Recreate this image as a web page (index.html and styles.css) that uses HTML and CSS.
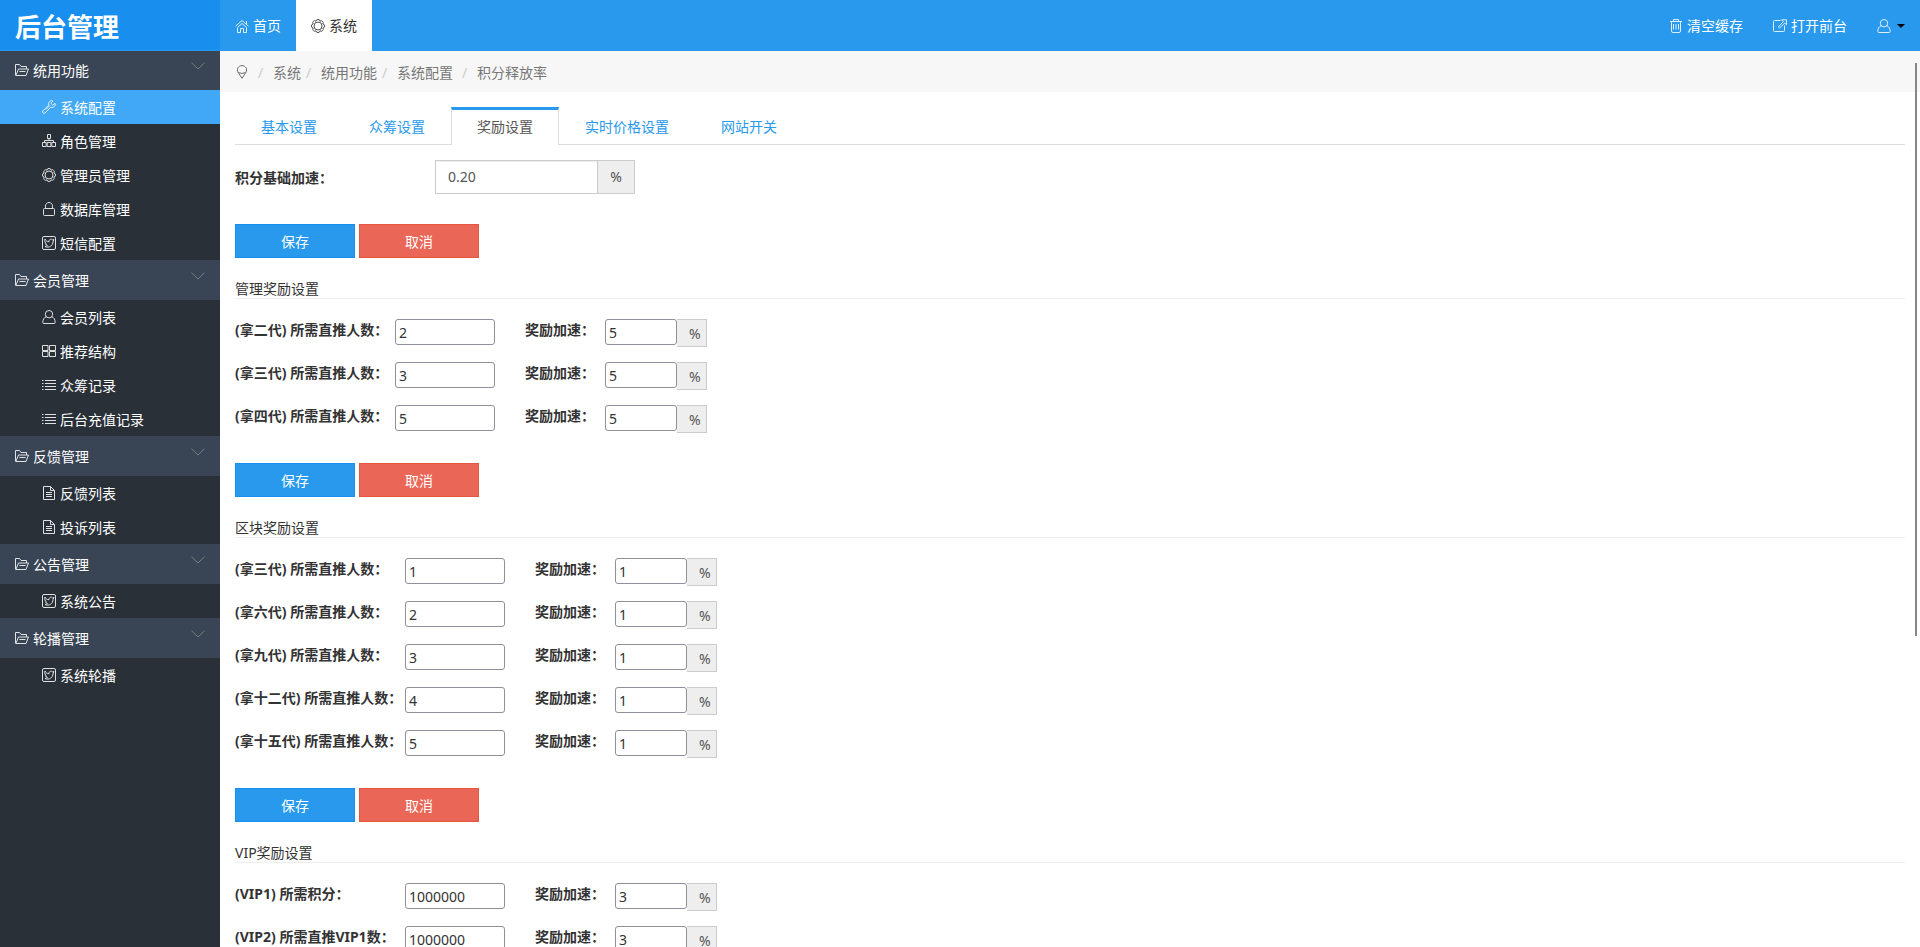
FILE: index.html
```html
<!DOCTYPE html>
<html lang="zh-CN">
<head>
    <meta charset="UTF-8">
    <meta name="viewport" content="width=device-width, initial-scale=1.0">
    <title>后台管理</title>
    <link rel="stylesheet" href="styles.css">
</head>
<body>
    <!-- 图标 -->
    <svg class="sprite" aria-hidden="true">
        <symbol id="i-home" viewBox="0 0 14 14"><path d="M.5 7.300 7 1.500l6.500 5.800M2.500 8.500 7 4.500l4.500 4v5h-3v-4h-3v4h-3zM11.500 2v3"/></symbol>
        <symbol id="i-gear" viewBox="0 0 14 14"><circle cx="7" cy="7" r="4"/><path d="M11.800 5.010A2 2 0 0 1 11.800 8.990 2 2 0 0 1 8.990 11.800 2 2 0 0 1 5.010 11.800 2 2 0 0 1 2.200 8.990 2 2 0 0 1 2.200 5.010 2 2 0 0 1 5.010 2.200 2 2 0 0 1 8.990 2.200 2 2 0 0 1 11.800 5.010z"/></symbol>
        <symbol id="i-folder" viewBox="0 0 14 14"><path d="M.5 12V1.500h4l1.500 2h5.500V6M.8 12.500 3.500 6h10L11 12.500H.5M4.500 8.500h6"/></symbol>
        <symbol id="i-down" viewBox="0 0 14 8"><path d="M.5.8 7 7 13.500.8"/></symbol>
        <symbol id="i-wrench" viewBox="0 0 14 14"><path d="M13 3.200 10.800 5.200 8.900 3.300 11 1C8.500-.2 6 2 6.800 5L.8 11c-.8 1.500.8 2.900 2.100 2.100L8.800 7.200c3 1 5.200-1.500 4.200-4z"/><path d="M2.300 11.700h.2M8 5.500l-4 4"/></symbol>
        <symbol id="i-role" viewBox="0 0 14 14"><path d="M5.500.5h3v4h-3zM7 4.500V7M2.500 8.500V6.500h9v2M.5 8.500h3.700v4H.5zM5.200 8.500h3.700v4H5.200zM9.800 8.500h3.700v4H9.800z"/></symbol>
        <symbol id="i-lock" viewBox="0 0 14 14"><rect x="1.500" y="6.500" width="11" height="7" rx="1"/><path d="M3.500 6.500V4.200C3.500-.7 10.500-.7 10.500 4.200V6.500"/></symbol>
        <symbol id="i-bird" viewBox="0 0 14 14"><rect x=".5" y=".5" width="13" height="13" rx="1.500"/><path d="M3 3c.8 2 2.300 2.700 4 2.700C7 3 9.500 2.500 10.700 4L12 3.500l-1 2C11.200 9.500 7 12.500 3 10.500c1.200 0 2-.3 2.500-.9-1-.2-1.700-.8-2-1.700h.9C3 7 2.500 5 3 3z"/></symbol>
        <symbol id="i-user" viewBox="0 0 14 14"><circle cx="7" cy="4.200" r="3.700"/><path d="M4.400 6.600C2 7.500.8 9.500.8 12.500c0 .7.400 1 1 1h10.400c.6 0 1-.3 1-1 0-3-1.200-5-3.600-5.900"/></symbol>
        <symbol id="i-grid" viewBox="0 0 14 14"><path d="M.5 1.500h5.500v5H.5zM7.500 1.500h6v5h-6zM.5 7.500h5.500v5H.5zM7.500 7.500h6v5h-6z"/></symbol>
        <symbol id="i-list" viewBox="0 0 14 14"><path d="M0 2.500h1.500M3 2.500h11M0 5.500h1.500M3 5.500h11M0 8.500h1.500M3 8.500h11M0 11.500h1.500M3 11.500h11"/></symbol>
        <symbol id="i-doc" viewBox="0 0 14 14"><path d="M1.500.5h7l4 4v9h-11zM8.500.5v4h4M4 6.500h6M4 8.500h6M4 10.500h6"/></symbol>
        <symbol id="i-pin" viewBox="0 0 14 14"><path d="M7 13.300 3.200 7.600C1 4 3.500.6 7 .6s6 3.400 3.800 7zM3.500 7.500q3.500 2 7 0"/></symbol>
        <symbol id="i-trash" viewBox="0 0 14 14"><path d="M1 2.500h12M4.500 2.500v-2h5v2M2.500 2.500v9.500q0 1.500 1.500 1.500h6q1.500 0 1.500-1.500V2.500M4.500 5v5.500M7 5v5.500M9.500 5v5.500"/></symbol>
        <symbol id="i-open" viewBox="0 0 14 14"><path d="M7.500 1.500H1.500q-1 0-1 1v9q0 1 1 1h9q1 0 1-1v-5M8.500.8h5v5L11.700 4 6.500 9.200 5.300 8 10.300 2.600z"/></symbol>
    </svg>

    <header class="topbar">
        <a class="logo" href="#">后台管理</a>
        <nav class="topnav">
            <a href="#"><svg class="icon"><use href="#i-home"/></svg>首页</a>
            <a class="active" href="#"><svg class="icon"><use href="#i-gear"/></svg>系统</a>
        </nav>
        <div class="topnav">
            <a href="#"><svg class="icon"><use href="#i-trash"/></svg>清空缓存</a>
            <a href="#"><svg class="icon"><use href="#i-open"/></svg>打开前台</a>
            <button class="user" type="button" aria-label="用户"><svg class="icon"><use href="#i-user"/></svg><span class="caret"></span></button>
        </div>
    </header>

    <div class="main">
        <nav class="sidebar">
            <button class="group" type="button"><svg class="icon"><use href="#i-folder"/></svg>统用功能<svg class="icon down"><use href="#i-down"/></svg></button>
            <a class="active" href="#"><svg class="icon"><use href="#i-wrench"/></svg>系统配置</a>
            <a href="#"><svg class="icon"><use href="#i-role"/></svg>角色管理</a>
            <a href="#"><svg class="icon"><use href="#i-gear"/></svg>管理员管理</a>
            <a href="#"><svg class="icon"><use href="#i-lock"/></svg>数据库管理</a>
            <a href="#"><svg class="icon"><use href="#i-bird"/></svg>短信配置</a>
            <button class="group" type="button"><svg class="icon"><use href="#i-folder"/></svg>会员管理<svg class="icon down"><use href="#i-down"/></svg></button>
            <a href="#"><svg class="icon"><use href="#i-user"/></svg>会员列表</a>
            <a href="#"><svg class="icon"><use href="#i-grid"/></svg>推荐结构</a>
            <a href="#"><svg class="icon"><use href="#i-list"/></svg>众筹记录</a>
            <a href="#"><svg class="icon"><use href="#i-list"/></svg>后台充值记录</a>
            <button class="group" type="button"><svg class="icon"><use href="#i-folder"/></svg>反馈管理<svg class="icon down"><use href="#i-down"/></svg></button>
            <a href="#"><svg class="icon"><use href="#i-doc"/></svg>反馈列表</a>
            <a href="#"><svg class="icon"><use href="#i-doc"/></svg>投诉列表</a>
            <button class="group" type="button"><svg class="icon"><use href="#i-folder"/></svg>公告管理<svg class="icon down"><use href="#i-down"/></svg></button>
            <a href="#"><svg class="icon"><use href="#i-bird"/></svg>系统公告</a>
            <button class="group" type="button"><svg class="icon"><use href="#i-folder"/></svg>轮播管理<svg class="icon down"><use href="#i-down"/></svg></button>
            <a href="#"><svg class="icon"><use href="#i-bird"/></svg>系统轮播</a>
        </nav>

        <main class="content">
            <div class="breadcrumb">
                <svg class="icon"><use href="#i-pin"/></svg>
                <span class="sep wide">/</span><a href="#">系统</a>
                <span class="sep">/</span><a href="#">统用功能</a>
                <span class="sep">/</span><a href="#">系统配置</a>
                <span class="sep wide">/</span><span>积分释放率</span>
            </div>

            <div class="page">
                <nav class="tabs">
                    <a href="#">基本设置</a>
                    <a href="#">众筹设置</a>
                    <a class="active" href="#">奖励设置</a>
                    <a href="#">实时价格设置</a>
                    <a href="#">网站开关</a>
                </nav>

                <form>
                    <div class="field">
                        <label for="base">积分基础加速：</label>
                        <div class="input-group">
                            <input id="base" type="text" value="0.20"><span>%</span>
                        </div>
                    </div>
                    <div class="actions">
                        <button class="btn save" type="button">保存</button>
                        <button class="btn cancel" type="button">取消</button>
                    </div>
                </form>

                <form>
                    <h2>管理奖励设置</h2>
                    <div class="row">
                        <label for="m1">(拿二代) 所需直推人数：</label><input id="m1" type="text" value="2">
                        <label class="rate" for="mr1">奖励加速：</label><input class="short" id="mr1" type="text" value="5"><span class="unit">%</span>
                    </div>
                    <div class="row">
                        <label for="m2">(拿三代) 所需直推人数：</label><input id="m2" type="text" value="3">
                        <label class="rate" for="mr2">奖励加速：</label><input class="short" id="mr2" type="text" value="5"><span class="unit">%</span>
                    </div>
                    <div class="row">
                        <label for="m3">(拿四代) 所需直推人数：</label><input id="m3" type="text" value="5">
                        <label class="rate" for="mr3">奖励加速：</label><input class="short" id="mr3" type="text" value="5"><span class="unit">%</span>
                    </div>
                    <div class="actions">
                        <button class="btn save" type="button">保存</button>
                        <button class="btn cancel" type="button">取消</button>
                    </div>
                </form>

                <form class="wide-label">
                    <h2>区块奖励设置</h2>
                    <div class="row">
                        <label for="b1">(拿三代) 所需直推人数：</label><input id="b1" type="text" value="1">
                        <label class="rate" for="br1">奖励加速：</label><input class="short" id="br1" type="text" value="1"><span class="unit">%</span>
                    </div>
                    <div class="row">
                        <label for="b2">(拿六代) 所需直推人数：</label><input id="b2" type="text" value="2">
                        <label class="rate" for="br2">奖励加速：</label><input class="short" id="br2" type="text" value="1"><span class="unit">%</span>
                    </div>
                    <div class="row">
                        <label for="b3">(拿九代) 所需直推人数：</label><input id="b3" type="text" value="3">
                        <label class="rate" for="br3">奖励加速：</label><input class="short" id="br3" type="text" value="1"><span class="unit">%</span>
                    </div>
                    <div class="row">
                        <label for="b4">(拿十二代) 所需直推人数：</label><input id="b4" type="text" value="4">
                        <label class="rate" for="br4">奖励加速：</label><input class="short" id="br4" type="text" value="1"><span class="unit">%</span>
                    </div>
                    <div class="row">
                        <label for="b5">(拿十五代) 所需直推人数：</label><input id="b5" type="text" value="5">
                        <label class="rate" for="br5">奖励加速：</label><input class="short" id="br5" type="text" value="1"><span class="unit">%</span>
                    </div>
                    <div class="actions">
                        <button class="btn save" type="button">保存</button>
                        <button class="btn cancel" type="button">取消</button>
                    </div>
                </form>

                <form class="wide-label">
                    <h2>VIP奖励设置</h2>
                    <div class="row">
                        <label for="v1">(VIP1) 所需积分：</label><input id="v1" type="text" value="1000000">
                        <label class="rate" for="vr1">奖励加速：</label><input class="short" id="vr1" type="text" value="3"><span class="unit">%</span>
                    </div>
                    <div class="row">
                        <label for="v2">(VIP2) 所需直推VIP1数：</label><input id="v2" type="text" value="1000000">
                        <label class="rate" for="vr2">奖励加速：</label><input class="short" id="vr2" type="text" value="3"><span class="unit">%</span>
                    </div>
                </form>
            </div>
        </main>
        <div class="scroll-thumb"></div>
    </div>
</body>
</html>
```
FILE: styles.css
```css
* {
    box-sizing: border-box;
}
body {
    margin: 0;
    height: 100vh;
    display: flex;
    flex-direction: column;
    overflow: hidden;
    background: #fff;
    color: #333;
    font: 14px/20px "Noto Sans", "Noto Sans CJK SC", sans-serif;
}
a {
    color: inherit;
    text-decoration: none;
}
button, input {
    font: inherit;
    color: inherit;
    margin: 0;
}
button {
    border: 0;
    padding: 0;
    background: none;
    cursor: pointer;
}
.sprite {
    display: none;
}
.icon {
    width: 14px;
    height: 14px;
    flex: none;
    fill: none;
    stroke: currentColor;
    stroke-width: 1;
    opacity: .85;
}

/* 顶部 */
.topbar {
    display: flex;
    flex: none;
    height: 51px;
    background: #2899ec;
    color: #fff;
}
.logo {
    width: 220px;
    height: 50px;
    padding-left: 15px;
    background: #188eee;
    font-size: 26px;
    font-weight: bold;
    line-height: 54px;
}
.topnav {
    display: flex;
}
.topnav:last-child {
    margin-left: auto;
}
.topnav a, .user {
    display: flex;
    align-items: center;
    gap: 4px;
    padding: 0 15px;
}
.topnav .active {
    background: #fff;
    color: #333;
}
.topnav .user {
    gap: 6px;
}
.caret {
    border: 4px solid transparent;
    border-top-color: #000;
    border-bottom: 0;
}

/* 左侧菜单 */
.main {
    display: flex;
    flex: 1;
    min-height: 0;
    position: relative;
}
.sidebar {
    width: 220px;
    flex: none;
    background: #293038;
    color: #fff;
}
.sidebar a, .group {
    display: flex;
    align-items: center;
    gap: 4px;
    width: 100%;
    height: 34px;
    padding: 2px 15px 0 42px;
}
.sidebar .icon {
    margin-bottom: 2px;
}
.sidebar .active {
    background: #40a8f6;
}
.sidebar .group {
    height: 40px;
    padding-left: 15px;
    background: #394555;
}
.sidebar .group:first-child {
    height: 39px;
    padding-top: 0;
}
.sidebar .down {
    height: 8px;
    margin: 0 0 10px auto;
    color: #888;
}

/* 内容 */
.content {
    flex: 1;
    min-width: 0;
    overflow: hidden;
}
.breadcrumb {
    display: flex;
    align-items: center;
    height: 41px;
    padding: 2px 15px 0;
    background: #f7f7f7;
    color: #777;
}
.breadcrumb .icon {
    margin-bottom: 2px;
    color: #555;
}
.sep {
    width: 20px;
    padding-left: 5px;
    color: #ccc;
}
.sep.wide {
    width: 24px;
    padding-left: 9px;
}
.page {
    padding: 15px;
}
.tabs {
    display: flex;
    border-bottom: 1px solid #ddd;
    margin-bottom: 15px;
}
.tabs a {
    padding: 7px 25px 8px;
    border: 1px solid transparent;
    border-top-width: 3px;
    border-bottom: 0;
    margin-bottom: -1px;
    color: #2899ec;
}
.tabs .active {
    background: #fff;
    border-color: #2899ec #ddd;
    color: #555;
}
.field {
    display: flex;
    align-items: center;
}
label {
    font-weight: bold;
    line-height: 22px;
}
.field label {
    width: 200px;
    padding-top: 2px;
}
.input-group {
    display: flex;
    width: 200px;
    height: 34px;
    border: 1px solid #ccc;
    color: #555;
}
.input-group input {
    flex: 1;
    min-width: 0;
    border: 0;
    padding: 0 12px;
    box-shadow: inset 0 1px 1px rgba(0, 0, 0, .075);
}
.input-group span {
    width: 37px;
    border-left: 1px solid #ccc;
    background: #eee;
    line-height: 32px;
    text-align: center;
}
.actions {
    display: flex;
    gap: 4px;
    margin: 30px 0 22px;
}
.btn {
    width: 120px;
    height: 34px;
    padding-top: 2px;
    color: #fff;
}
.save {
    background: #2899ec;
    border: 1px solid #188eee;
}
.cancel {
    background: #ea6757;
    border: 1px solid #e65442;
}
h2 {
    margin: 0 0 20px;
    border-bottom: 1px solid #eee;
    font-size: 14px;
    font-weight: normal;
    line-height: 18px;
}
.row {
    display: flex;
    align-items: flex-start;
    height: 28px;
    margin-bottom: 15px;
}
.row label {
    width: 160px;
    white-space: nowrap;
}
.wide-label label {
    width: 170px;
}
.row .rate {
    width: 80px;
    margin-left: 30px;
}
.row input {
    width: 100px;
    height: 26px;
    padding: 0 3px;
    border: 1px solid #8f8f9d;
    border-radius: 3px;
}
.row .short {
    width: 72px;
}
.unit {
    width: 30px;
    height: 28px;
    padding-left: 12px;
    border: 1px solid #ccc;
    border-left: 0;
    background: #eee;
    color: #555;
    line-height: 28px;
}
.scroll-thumb {
    position: absolute;
    top: 12px;
    right: 3px;
    width: 2px;
    height: 64%;
    background: #868686;
}
```
